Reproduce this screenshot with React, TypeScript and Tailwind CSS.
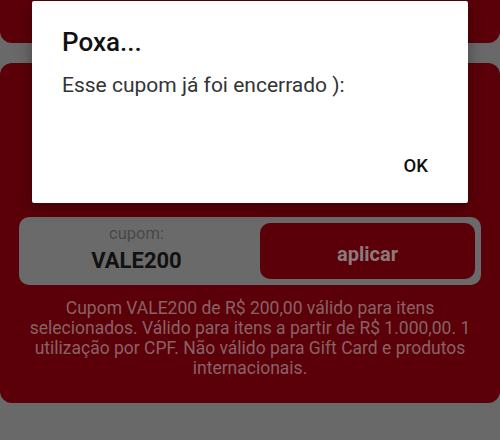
export default function App() {
  return (
    <div className="relative h-[440px] w-[500px] overflow-hidden bg-[#696969] font-['Roboto',sans-serif]">
      {/* card above, mostly scrolled off */}
      <div className="h-[43px] rounded-b-[12px] bg-[#5b0008]" />

      {/* coupon card */}
      <div className="mt-[20px] flex h-[340px] flex-col rounded-[12px] bg-[#5b0008] px-[19px]">
        <div className="h-[154px]" />
        <div className="flex h-[68px] items-stretch rounded-[10px] bg-[#6a6a6a] p-[6px] pl-0">
          <div className="flex flex-1 flex-col items-center gap-[4px] pr-[6px] pt-[1px]">
            <span className="text-[16.5px] leading-[20px] text-[#484848]">cupom:</span>
            <span className="text-[22px] font-bold leading-[26px] text-[#111]">VALE200</span>
          </div>
          <button className="flex w-[215px] items-center justify-center rounded-[10px] bg-[#5b0008] pt-[6px] text-[20px] font-bold text-[#8e7a7c]">
            aplicar
          </button>
        </div>
        <p className="mx-auto mt-[13px] w-[450px] text-center text-[17.5px] leading-[20px] text-[#8a6266]">
          Cupom VALE200 de R$ 200,00 válido para itens selecionados. Válido para itens a partir de R$ 1.000,00. 1
          utilização por CPF. Não válido para Gift Card e produtos internacionais.
        </p>
      </div>

      {/* alert dialog */}
      <div className="absolute left-[32px] top-[1px] flex h-[202px] w-[436px] flex-col rounded-[2px] bg-white shadow-[0_4px_16px_rgba(0,0,0,0.35)]">
        <h2 className="pl-[30px] pt-[26px] text-[26px] font-medium leading-[30px] text-[#111]">Poxa...</h2>
        <p className="pl-[30px] pt-[15px] text-[21px] leading-[26px] text-[#333]">Esse cupom já foi encerrado ):</p>
        <div className="mt-auto flex justify-end pb-[26px] pr-[40px]">
          <span className="text-[18.5px] font-medium leading-[22px] text-[#111]">OK</span>
        </div>
      </div>
    </div>
  )
}
